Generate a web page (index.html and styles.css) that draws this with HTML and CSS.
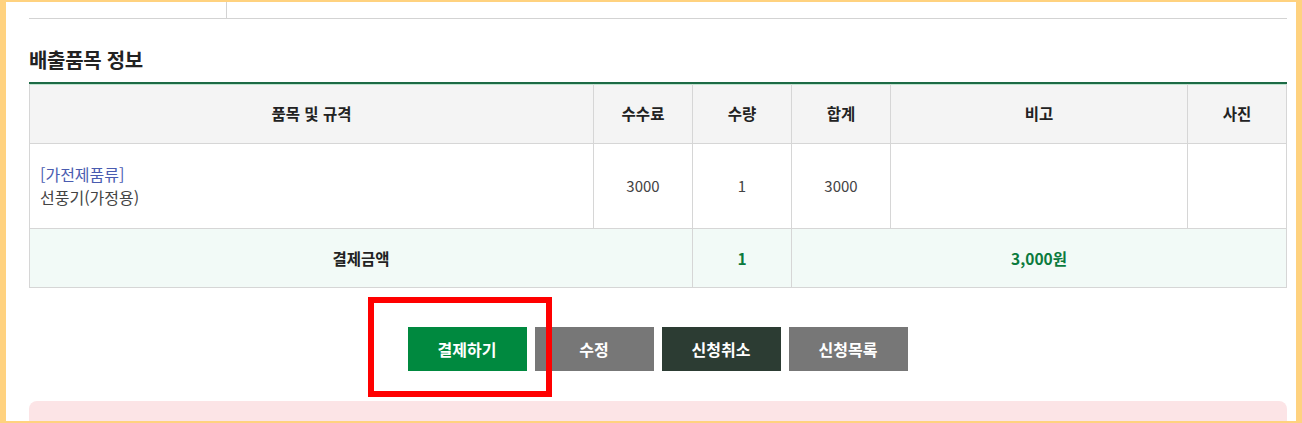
FILE: index.html
```html
<!DOCTYPE html>
<html lang="ko">
<head>
  <meta charset="UTF-8">
  <meta name="viewport" content="width=device-width, initial-scale=1.0">
  <title>배출품목 정보</title>
  <link rel="stylesheet" href="styles.css">
</head>
<body>
  <div class="frame">
    <div class="content">
      <div class="prev-row">
        <div class="prev-cell"></div>
      </div>

      <h3 class="section-title">배출품목 정보</h3>

      <table class="item-table">
        <colgroup>
          <col style="width:564px">
          <col style="width:99px">
          <col style="width:99px">
          <col style="width:99px">
          <col style="width:297px">
          <col>
        </colgroup>
        <thead>
          <tr>
            <th>품목 및 규격</th>
            <th>수수료</th>
            <th>수량</th>
            <th>합계</th>
            <th>비고</th>
            <th>사진</th>
          </tr>
        </thead>
        <tbody>
          <tr class="item-row">
            <td class="item-name">
              <span class="category">[가전제품류]</span><br>
              선풍기(가정용)
            </td>
            <td>3000</td>
            <td>1</td>
            <td>3000</td>
            <td></td>
            <td></td>
          </tr>
          <tr class="total-row">
            <td colspan="2" class="total-label">결제금액</td>
            <td class="total-value">1</td>
            <td colspan="3" class="total-value">3,000원</td>
          </tr>
        </tbody>
      </table>

      <div class="btn-group">
        <div class="btn-wrap">
          <button class="btn btn-pay">결제하기</button>
          <span class="highlight"></span>
        </div>
        <button class="btn btn-gray">수정</button>
        <button class="btn btn-dark">신청취소</button>
        <button class="btn btn-gray">신청목록</button>
      </div>

      <div class="notice"></div>
    </div>
  </div>
</body>
</html>
```

FILE: styles.css
```css
* {
  margin: 0;
  padding: 0;
  box-sizing: border-box;
}

body {
  font-family: 'Noto Sans CJK KR', 'Noto Sans', sans-serif;
  color: #333;
  background: #ffd27f;
}

.frame {
  height: 423px;
  border-style: solid;
  border-color: #ffd27f;
  border-width: 2px 6px 2px 6px;
  background: #fff;
  overflow: hidden;
}

.content {
  padding: 0 9px 0 23px;
}

.prev-row {
  height: 17px;
  border-bottom: 1px solid #d3d3d3;
}

.prev-cell {
  width: 198px;
  height: 16px;
  border-right: 1px solid #d3d3d3;
}

.section-title {
  margin-top: 28px;
  font-size: 20px;
  font-weight: bold;
  color: #222;
  line-height: 26px;
  letter-spacing: -0.3px;
}

.item-table {
  width: 100%;
  margin-top: 9px;
  border-collapse: collapse;
  border-top: 2px solid #1c6a45;
  table-layout: fixed;
  font-size: 15.5px;
}

.item-table th,
.item-table td {
  border: 1px solid #d6d6d6;
  text-align: center;
  vertical-align: middle;
}

.item-table thead tr:first-child th {
  border-top: none;
}

.item-table th {
  height: 60px;
  background: #f4f4f4;
  font-weight: bold;
  color: #222;
  box-shadow: inset 0 1px 0 #bfe4cf;
}

.item-row td {
  height: 85px;
  color: #444;
  font-size: 15px;
}

.item-table td.item-name {
  text-align: left;
  padding-left: 10px;
  line-height: 23px;
  font-size: 16px;
}

.category {
  color: #4a5cb0;
}

.total-row td {
  height: 59px;
  background: #f2faf7;
  font-weight: bold;
}

.total-label {
  color: #222;
}

.total-value {
  color: #0b7a3e;
}

.btn-group {
  display: flex;
  justify-content: center;
  gap: 8px;
  margin-top: 39px;
  margin-left: -1px;
}

.btn-wrap {
  position: relative;
}

.btn {
  display: block;
  width: 119px;
  height: 44px;
  border: none;
  font-family: inherit;
  font-size: 16px;
  font-weight: bold;
  color: #fff;
  cursor: pointer;
}

.btn-pay {
  background: #00893f;
}

.btn-gray {
  background: #777;
}

.btn-dark {
  background: #2c3c33;
}

.highlight {
  position: absolute;
  left: -40px;
  top: -30px;
  width: 184px;
  height: 100px;
  border: 6px solid #ff0000;
  pointer-events: none;
}

.notice {
  height: 60px;
  margin-top: 30px;
  background: #fce4e6;
  border-radius: 8px;
}
```
